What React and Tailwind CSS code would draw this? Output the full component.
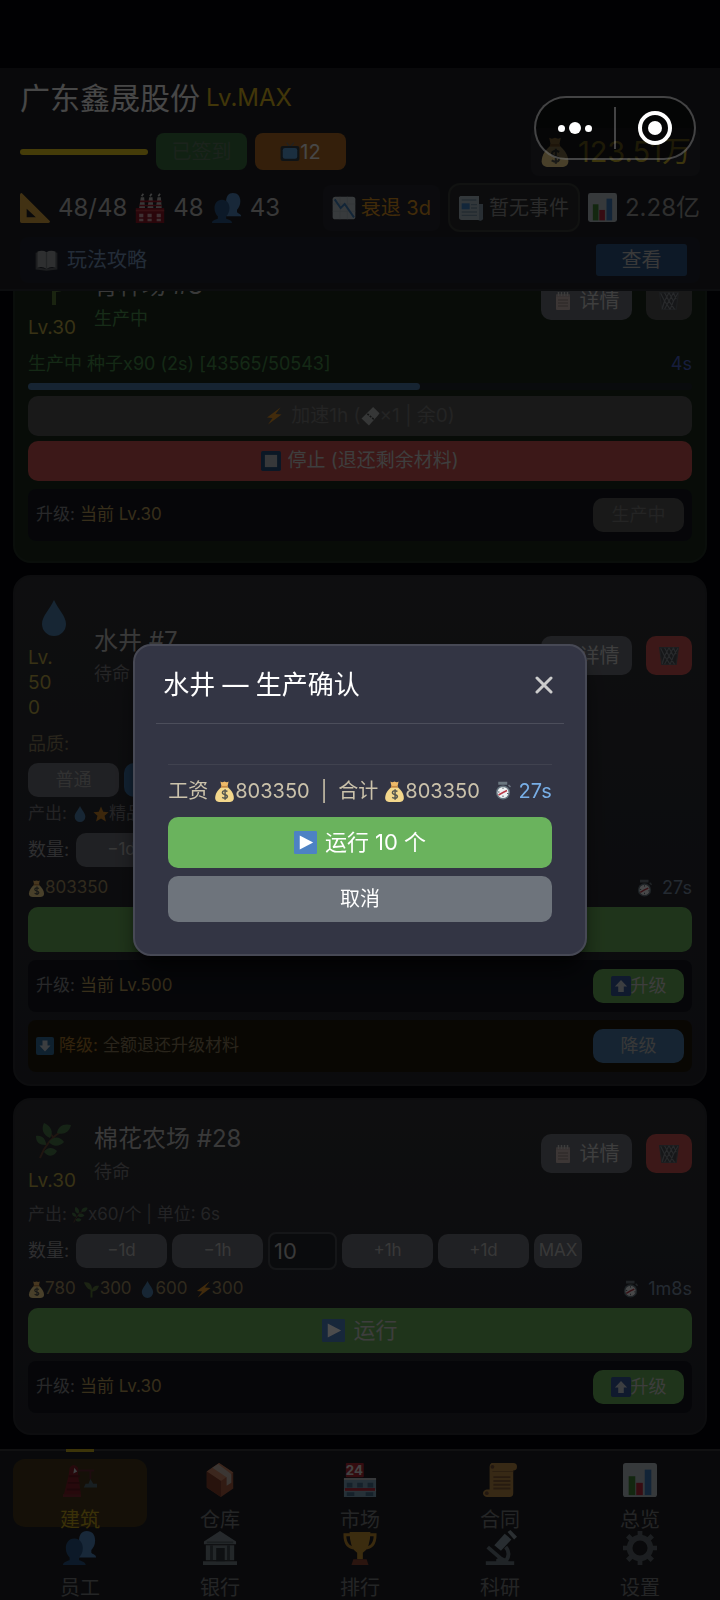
import React, { useState } from "react";
import clsx from "clsx";

// Emoji style icons, all on a 36x36 grid
const shapes = {
  tv: (
    <>
      <path d="M12 1l6 8 7-8" fill="none" stroke="#6b7075" strokeWidth="2" />
      <rect x="1" y="7" width="34" height="27" rx="4" fill="#33414c" />
      <rect x="5" y="11" width="26" height="19" rx="4" fill="#5d9fd8" />
    </>
  ),
  ruler: <path d="M2 0L36 34Q36 36 34 36H2Q0 36 0 34V2Q0 0 2 0ZM8 19V29H19Z" fill="#d9a441" fillRule="evenodd" />,
  factory: (
    <>
      <path d="M5 18L7 5h4l1 13ZM15 18l2-13h4l1 13ZM25 18l2-13h4l1 13Z" fill="#b9b9b9" />
      <path d="M5 15h27M6 10h26" stroke="#a51a2b" strokeWidth="2" />
      <path d="M8 4l2-3M18 4l2-3M28 4l2-3" stroke="#c8c8c8" strokeWidth="2" />
      <rect x="1" y="18" width="34" height="18" fill="#8c1525" />
      <path d="M1 21h34" stroke="#b43642" strokeWidth="2" />
      <path d="M5 25h5v4H5zM15 25h5v4h-5zM26 25h5v4h-5zM5 31h5v3H5zM15 31h5v3h-5zM26 31h5v3h-5z" fill="#d3a5aa" />
    </>
  ),
  people: (
    <>
      <path d="M25 0c6 0 9 4 9 10 0 5-2 8-4 10v3c2 2 5 2 5 5H17V10C17 4 20 0 25 0Z" fill="#5085be" />
      <path d="M12 8c6 0 9 5 9 10s-2 8-4 10v3c3 1 7 2 7 5H0c0-3 4-4 7-5v-3c-2-2-4-5-4-10S6 8 12 8Z" fill="#2a5685" />
    </>
  ),
  chartDown: (
    <>
      <rect x="1" y="1" width="34" height="34" rx="4" fill="#bcc6cd" />
      <path d="M1 12h34M1 23h34M12 1v34M23 1v34" stroke="#a6b3bd" />
      <path d="M4 5l9 13 6-6 14 20" fill="none" stroke="#3f7cb8" strokeWidth="3" />
    </>
  ),
  news: (
    <>
      <path d="M26 12h10v20a4 4 0 0 1-8 2Z" fill="#889cac" />
      <path d="M2 0h28v36H4a4 4 0 0 1-4-4V2Z" fill="#a9b8c3" />
      <path d="M4 6h22M18 13h9M18 18h9M4 24h23M4 29h23" stroke="#7690a3" strokeWidth="2" />
      <rect x="4" y="11" width="12" height="9" fill="#3c7fc4" />
    </>
  ),
  bars: (
    <>
      <rect width="36" height="36" rx="3" fill="#b6c0c7" />
      <rect x="6" y="14" width="7" height="20" fill="#418438" />
      <rect x="14" y="21" width="7" height="13" fill="#b92b3e" />
      <rect x="23" y="7" width="7" height="27" fill="#3c78b8" />
    </>
  ),
  book: (
    <>
      <path d="M1 6l4-1v24l12 2 14-2V5l4 1v26l-17 2L1 32Z" fill="#5e6368" />
      <path d="M4 4q8-3 14 1v26q-6-4-14-2ZM32 4q-8-3-14 1v26q6-4 14-2Z" fill="#9a9ea1" />
      <path d="M18 5v26" stroke="#73787c" strokeWidth="2" />
    </>
  ),
  bag: (
    <>
      <path d="M11 1q3 2 7 0 4 2 7 0l-2 9H13Z" fill="#eeb968" />
      <path d="M13 10h10c6 5 11 12 11 19 0 5-4 7-8 7H10c-4 0-8-2-8-7 0-7 5-14 11-19Z" fill="#f3d78c" />
      <path d="M12 10h12" stroke="#c68b43" strokeWidth="3" />
      <path d="M23 18q-5-3-8 0-2 4 3 5t5 4q-2 5-9 1M19 14v18" fill="none" stroke="#54564f" strokeWidth="2.5" />
    </>
  ),
  bolt: <path d="M31 1L4 21l11 1L6 35 33 15l-12-1Z" fill="#dd9229" />,
  ticket: (
    <>
      <path d="M23 0l12 12-3 4L15 35 1 22Z" fill="#b5b8b8" />
      <path d="M12 13l13 11" stroke="#474a4a" strokeWidth="3" strokeDasharray="4 2" />
    </>
  ),
  stop: (
    <>
      <rect width="36" height="36" rx="3" fill="#264f7d" />
      <rect x="7" y="7" width="22" height="22" fill="#b9bdc1" />
    </>
  ),
  play: (
    <>
      <rect width="36" height="36" rx="2" fill="#4d82c4" />
      <path d="M9 7l21 11L9 29Z" fill="#fff" />
    </>
  ),
  up: (
    <>
      <rect width="36" height="36" rx="3" fill="#36579a" />
      <path d="M18 7L7 19h6v10h10V19h6Z" fill="#c9cfd8" />
    </>
  ),
  down: (
    <>
      <rect width="36" height="36" rx="4" fill="#356f9f" />
      <path d="M18 29L7 17h6V7h10v10h6Z" fill="#c9cfd8" />
    </>
  ),
  note: (
    <>
      <rect x="4" y="5" width="28" height="31" rx="2" fill="#c9b6b2" />
      <path d="M4 5h28v5H4Z" fill="#b7a7a7" />
      <path d="M9 0v8M15 0v8M21 0v8M27 0v8" stroke="#c9c9c9" strokeWidth="3" />
      <path d="M8 16h20M8 22h20M8 28h20" stroke="#8d7d7b" strokeWidth="2" />
    </>
  ),
  trash: (
    <g fill="none" stroke="#858b91" strokeWidth="2">
      <path d="M1 3h34l-4 30H5Z" fill="#4c4f54" stroke="#5f656b" />
      <path d="M3 4l7 14-4 14M10 3l8 15-8 15M18 3l8 15-6 15M26 3l5 12M10 18L18 3M18 18l8-15M26 18l8-14M6 30l4-12M10 18l10 15M18 18L10 33M18 18l10 15M26 18L20 33" />
    </g>
  ),
  drop: <path d="M18 0c4 9 12 16 12 24a12 12 0 0 1-24 0C6 16 14 9 18 0Z" fill="#4d80ad" />,
  star: <path d="M18 1l5 12 12 1-9 8 3 13-11-7-11 7 3-13-9-8 12-1Z" fill="#c9832a" />,
  herb: (
    <>
      <path d="M4 35C9 22 17 13 26 8M10 21l-4-3M17 14l-4-5M15 20l10-1M9 28l10 1" fill="none" stroke="#6d4a38" strokeWidth="2" />
      <path d="M8 0c7 3 10 9 6 15C7 12 5 6 8 0ZM35 2c-2 8-8 10-14 8 1-7 7-10 14-8ZM0 13c6-1 10 3 10 9-7 0-10-3-10-9ZM13 19c4-6 11-6 15 0-5 5-11 5-15 0ZM8 29c3-5 9-5 13-1-3 6-9 6-13 1Z" fill="#4c7a4c" />
    </>
  ),
  sprout: (
    <>
      <path d="M18 35V17" stroke="#587936" strokeWidth="4" />
      <path d="M2 3c12-2 17 5 17 16C10 18 7 13 2 3ZM34 10c-9-1-15 3-15 12 9 0 12-4 15-12Z" fill="#5e7a42" />
    </>
  ),
  watch: (
    <>
      <path d="M10 1h15v3H10zM29 6l4 4" stroke="#6b7780" strokeWidth="3" fill="#6b7780" />
      <circle cx="18" cy="21" r="14" fill="#66757f" />
      <circle cx="18" cy="21" r="11" fill="#eef1f3" />
      <path d="M9 26l9-5 8-4" fill="none" stroke="#b83a48" strokeWidth="3" />
      <path d="M18 11v3M8 20h3M18 30v-3M26 23h3" stroke="#55606a" strokeWidth="2" />
    </>
  ),
  crane: (
    <>
      <path d="M7 5q4-6 9 0v8l3 20H1L6 13Z" fill="#82212a" />
      <path d="M6 14h12M5 21h13M4 28h14" stroke="#641820" strokeWidth="2" />
      <path d="M16 8h17M29 8v9" stroke="#652b33" strokeWidth="2" />
      <path d="M12 5l3 4-4 2Z" fill="#cfd6db" />
      <path d="M24 22h12v4H22ZM29 17l3 5h-5Z" fill="#516873" />
      <rect y="33" width="19" height="3" fill="#842a32" />
    </>
  ),
  box: (
    <>
      <path d="M17 0l15 10v17L19 36 4 26V9Z" fill="#a95b42" />
      <path d="M17 0l15 10-13 9L4 9Z" fill="#c98465" />
      <path d="M4 9l15 10v17L4 26Z" fill="#86402e" />
      <path d="M10 5l15 10v9l5-3v-9L16 1Z" fill="#c5b6ac" />
    </>
  ),
  store: (
    <>
      <rect x="1" y="17" width="34" height="19" fill="#7fa5bd" />
      <path d="M4 21h6v5H4zM15 21h6v5h-6zM26 21h6v5h-6zM4 31h8v4H4zM24 31h8v4h-8z" fill="#486e8e" />
      <path d="M1 17h34M1 29h34" stroke="#b9c0c5" strokeWidth="2" />
      <path d="M2 28h32" stroke="#b72d3f" strokeWidth="3" />
      <rect x="3" width="19" height="15" rx="1" fill="#ae2836" />
      <text x="12" y="13" fontSize="14" fontWeight="700" textAnchor="middle" fill="#e0e0e0">24</text>
    </>
  ),
  scroll: (
    <>
      <path d="M9 0h23q4 0 4 4t-4 4v24q0 4-4 4H4q-4-1-4-4t4-4h3V4q0-3 2-4Z" fill="#b88a46" />
      <path d="M10 9h22" stroke="#8d6638" />
      <circle cx="10" cy="4" r="2" fill="#765039" />
      <circle cx="4" cy="32" r="2" fill="#765039" />
      <path d="M11 15h18M11 19h18M11 23h18M11 27h18" stroke="#825a37" strokeWidth="2" />
    </>
  ),
  bank: (
    <>
      <path d="M18 0l17 11v3H1v-3Z" fill="#7f8b93" />
      <path d="M3 15h30v16H3zM0 32h36v4H0z" fill="#77838b" />
      <path d="M9 15v16M27 15v16" stroke="#414a51" strokeWidth="3" />
      <rect x="14" y="18" width="9" height="14" fill="#30373c" />
      <path d="M4 12h28" stroke="#59646c" strokeWidth="2" />
    </>
  ),
  trophy: (
    <>
      <path d="M8 4H2q0 14 11 14M28 4h6q0 14-11 14" fill="none" stroke="#c18d30" strokeWidth="3" />
      <path d="M7 1h22q0 17-8 22v7h-6v-7Q7 18 7 1Z" fill="#c79433" />
      <path d="M11 30h14l2 6H9Z" fill="#914633" />
    </>
  ),
  microscope: (
    <>
      <path d="M24 17q6 7 0 15" fill="none" stroke="#6c7a84" strokeWidth="4" />
      <path d="M5 17l15 13" stroke="#6c7a84" strokeWidth="4" />
      <path d="M12 15l11-12 7 6-11 12Z" fill="#8798a3" />
      <path d="M26 1l3-2 7 7-3 3Z" fill="#8f9ea8" />
      <path d="M3 32h30v4H3ZM14 30q6-5 13 2H14Z" fill="#6c7a84" />
    </>
  ),
  gear: (
    <>
      <circle cx="18" cy="18" r="11" fill="none" stroke="#5e676e" strokeWidth="6" />
      <path d="M18 0v6M18 30v6M0 18h6M30 18h6M5 5l5 5M26 26l5 5M31 5l-5 5M5 31l5-5" stroke="#5e676e" strokeWidth="5" />
    </>
  ),
};

const Icon = ({ name, className }) => (
  <svg viewBox="0 0 36 36" className={clsx("shrink-0 overflow-visible", className)} aria-hidden="true">
    {shapes[name]}
  </svg>
);

const navItems = [
  { icon: "crane", label: "建筑" },
  { icon: "box", label: "仓库" },
  { icon: "store", label: "市场" },
  { icon: "scroll", label: "合同" },
  { icon: "bars", label: "总览" },
  { icon: "people", label: "员工" },
  { icon: "bank", label: "银行" },
  { icon: "trophy", label: "排行" },
  { icon: "microscope", label: "科研" },
  { icon: "gear", label: "设置" },
];

const Header = () => (
  <header className="shrink-0 border-b-2 border-[#2b2d33] bg-[#202127] px-5 pt-2 pb-[6px]">
    <div className="flex h-11 items-center gap-[6px]">
      <h1 className="text-[30px] text-[#eeeeee]">广东鑫晟股份</h1>
      <span className="text-2xl text-[#d9b51f]">Lv.MAX</span>
    </div>

    <div className="mt-[5px] flex h-[53px] items-center">
      <div className="h-[6px] w-32 rounded-full bg-[#e6c81e]" />
      <button className="ml-2 h-[37px] w-[91px] rounded-lg bg-[#3a6e40] text-xl text-[#5c7660]" disabled>
        已签到
      </button>
      <button className="ml-2 flex h-[37px] w-[91px] items-center justify-center rounded-lg bg-[#ad6a26] text-xl text-[#eeeeee]">
        <Icon name="tv" className="size-5" />12
      </button>
      <div className="ml-auto flex h-12 items-center gap-2 rounded-lg bg-[#282931] px-[9px] text-[29px] text-[#c9b12e]">
        <Icon name="bag" className="size-[30px]" />123.51万
      </div>
    </div>

    <div className="mt-[5px] flex h-[49px] items-center text-2xl text-[#bbbbbb]">
      <Icon name="ruler" className="size-[30px]" />
      <span className="ml-2">48/48</span>
      <Icon name="factory" className="ml-2 size-[30px]" />
      <span className="ml-2">48</span>
      <Icon name="people" className="ml-2 size-[30px]" />
      <span className="ml-2">43</span>
      <div className="ml-auto flex h-[46px] items-center gap-[5px] rounded-lg bg-[#26272f] px-[9px] text-xl text-[#d98f1f]">
        <Icon name="chartDown" className="size-6" />衰退 3d
      </div>
      <div className="ml-2 flex h-[49px] items-center gap-[6px] rounded-xl border-2 border-[#3a3d39] bg-[#292b2d] px-[9px] text-xl text-[#8c8c8c]">
        <Icon name="news" className="size-6" />暂无事件
      </div>
      <Icon name="bars" className="ml-2 size-[29px]" />
      <span className="ml-2 text-[#999999]">2.28亿</span>
    </div>

    <div className="mt-[5px] flex h-[46px] items-center rounded-lg bg-[#20242f] pr-[13px] pl-[15px]">
      <Icon name="book" className="size-[23px]" />
      <span className="ml-[9px] text-xl text-[#7694bd]">玩法攻略</span>
      <button className="ml-auto h-8 w-[91px] rounded-[3px] bg-[#2e5684] text-xl text-[#bfbfbf]">查看</button>
    </div>
  </header>
);

const Card = ({ icon, level, name, status, running, className, children }) => (
  <section
    className={clsx(
      "rounded-[18px] border-2 px-[13px] pt-[14px]",
      running ? "border-[#233126] bg-[#1b2a1c]" : "border-[#2c2e33] bg-linear-to-b from-[#303136] to-[#25262e]",
      className
    )}
  >
    <div className="flex items-center">
      <div className="flex w-[52px] flex-col text-[19px] leading-[25px] text-[#bba846]">
        <span className="flex h-[54px] items-center justify-center">
          <Icon name={icon} className="size-9" />
        </span>
        {level.map((part) => (
          <span key={part}>{part}</span>
        ))}
      </div>
      <div className="ml-[14px] flex-1">
        <h2 className="text-2xl leading-9 text-[#bfbfbf]">{name}</h2>
        <p className={clsx("text-lg leading-[30px]", running ? "text-[#4d9450]" : "text-[#7c7c80]")}>{status}</p>
      </div>
      <button className="flex h-[39px] w-[91px] items-center justify-center gap-2 rounded-[10px] bg-[#6c6f78] text-xl text-[#cfcfcf]">
        <Icon name="note" className="size-[18px]" />详情
      </button>
      <button
        aria-label="拆除"
        className={clsx(
          "ml-[14px] flex h-[39px] w-[46px] items-center justify-center rounded-[10px]",
          running ? "bg-[#555555]" : "bg-[#c95350]"
        )}
      >
        <Icon name="trash" className="size-5" />
      </button>
    </div>
    <div className="mt-[10px] flex flex-col gap-[5px]">{children}</div>
  </section>
);

const Quantity = ({ id }) => {
  const [amount, setAmount] = useState("10");
  const step = "h-[34px] w-[91px] rounded-[10px] bg-[#6c6f78] text-[17px] text-[#bdbdbd]";

  return (
    <div className="flex h-[38px] items-center gap-[5px]">
      <label htmlFor={id} className="w-[43px] shrink-0 text-lg text-[#9c9ca0]">数量:</label>
      <button className={step}>−1d</button>
      <button className={step}>−1h</button>
      <input
        id={id}
        value={amount}
        onChange={(e) => setAmount(e.target.value)}
        className="h-[38px] w-[69px] rounded-lg border-2 border-[#484a50] bg-[#24262d] px-1 text-[22px] text-[#bfbfbf]"
      />
      <button className={step}>+1h</button>
      <button className={step}>+1d</button>
      <button className="h-[34px] w-12 rounded-[10px] bg-[#6c6f78] text-[17px] text-[#bdbdbd]">MAX</button>
    </div>
  );
};

const Costs = ({ items, time }) => (
  <div className="flex h-7 items-center gap-[7px] text-[17px] text-[#a08c62]">
    {items.map(([icon, value]) => (
      <span key={icon} className="flex items-center">
        <Icon name={icon} className="size-[17px]" />{value}
      </span>
    ))}
    <span className="ml-auto flex items-center gap-[9px] text-lg text-[#7a8ca5]">
      <Icon name="watch" className="size-[17px]" />{time}
    </span>
  </div>
);

const RunButton = () => (
  <button className="flex h-[45px] items-center justify-center gap-2 rounded-[10px] bg-[#6ab05a] text-[22px] text-[#cccccc]">
    <Icon name="play" className="size-[23px]" />运行
  </button>
);

const UpgradeRow = ({ level, children }) => (
  <div className="mt-[3px] flex h-[52px] items-center rounded-lg bg-[#141720] px-2 text-[17px]">
    <span className="text-[#85878c]">升级:</span>
    <span className="ml-[5px] text-[#b89b58]">当前 {level}</span>
    {children}
  </div>
);

const UpgradeButton = () => (
  <button className="ml-auto flex h-[34px] w-[91px] items-center justify-center rounded-[10px] bg-[#6ab05a] text-lg text-[#cccccc]">
    <Icon name="up" className="size-5" />升级
  </button>
);

const Nav = () => (
  <nav className="grid shrink-0 grid-cols-5 border-t-2 border-[#3a3b3e] bg-[#202126] px-[10px] pt-2 pb-[5px]">
    {navItems.map((item, index) => (
      <a
        key={item.label}
        href="#"
        className={clsx(
          "relative mx-[3px] flex h-[68px] flex-col items-center rounded-xl pt-1 text-xl",
          index === 0 ? "bg-[#46381d] text-[#c2a31d]" : "text-[#7a7c7f]"
        )}
      >
        {index === 0 && <span className="absolute -top-[10px] h-[3px] w-7 bg-[#c9ad1e]" />}
        <Icon name={item.icon} className="size-[34px]" />
        <span className="mt-[13px] leading-5">{item.label}</span>
      </a>
    ))}
  </nav>
);

const ConfirmDialog = () => (
  <div className="fixed inset-0 flex items-center justify-center bg-black/70">
    <div
      role="dialog"
      aria-labelledby="confirm-title"
      className="w-[63%] rounded-[18px] border-2 border-[#474955] bg-[#333544] px-[21px] pb-8 shadow-xl shadow-black/60"
    >
      <div className="flex h-[78px] items-center justify-between border-b border-[#4c4e5b] px-[7px]">
        <h2 id="confirm-title" className="text-[26px] text-white">水井 — 生产确认</h2>
        <button aria-label="关闭" className="p-1">
          <svg viewBox="0 0 18 18" className="size-[18px]" stroke="#cccccc" strokeWidth="3" strokeLinecap="round">
            <path d="M2 2l14 14M16 2L2 16" />
          </svg>
        </button>
      </div>
      <div className="px-3">
        <div className="h-[41px] border-b border-[#40424f]" />
        <div className="flex h-[52px] items-center text-xl whitespace-nowrap text-[#cbc2ab]">
          <span>工资</span>
          <Icon name="bag" className="ml-[6px] size-[21px]" />
          <span>803350</span>
          <span className="mx-[11px]">|</span>
          <span>合计</span>
          <Icon name="bag" className="ml-[6px] size-[21px]" />
          <span>803350</span>
          <span className="ml-auto flex items-center gap-[7px] text-[#78aee6]">
            <Icon name="watch" className="size-[18px]" />27s
          </span>
        </div>
        <button className="flex h-[51px] w-full items-center justify-center gap-2 rounded-[10px] bg-[#6ab35d] text-[22px] text-white">
          <Icon name="play" className="size-[23px]" />运行 10 个
        </button>
        <button className="mt-2 h-[46px] w-full rounded-[10px] bg-[#6e747c] text-xl text-white">取消</button>
      </div>
    </div>
  </div>
);

// Host app capsule, always above the page and its dialogs
const Capsule = () => (
  <div className="fixed top-24 right-6 flex h-16 w-[162px] items-center rounded-full border-2 border-white/25 bg-black/50">
    <button aria-label="更多" className="flex flex-1 items-center justify-center gap-1">
      <span className="size-[7px] rounded-full bg-white" />
      <span className="size-3 rounded-full bg-white" />
      <span className="size-[7px] rounded-full bg-white" />
    </button>
    <span className="h-[42px] w-[2px] bg-white/25" />
    <button aria-label="退出" className="flex flex-1 items-center justify-center">
      <span className="flex size-[34px] items-center justify-center rounded-full border-4 border-white">
        <span className="size-[14px] rounded-full bg-white" />
      </span>
    </button>
  </div>
);

const App = () => {
  return (
    <div className="flex h-screen flex-col overflow-hidden bg-[#04040a] pt-[68px] font-['Inter','Noto_Sans_CJK_SC',sans-serif]">
      <Header />

      <main className="min-h-0 flex-1 overflow-hidden px-[13px]">
        {/* list is scrolled down, so the first card starts under the header */}
        <div className="-mt-[46px] flex flex-col gap-3">
          <Card icon="sprout" level={["Lv.30"]} name="育种场 #8" status="生产中" running className="pb-5">
            <div className="flex h-7 items-center justify-between text-lg text-[#458a49]">
              <span>生产中 种子x90 (2s) [43565/50543]</span>
              <span className="text-[#4b62c8]">4s</span>
            </div>
            <div className="mb-[1px] h-[7px] rounded-full bg-[#20262d]">
              <div className="h-full rounded-full bg-[#4c7ba8]" style={{ width: "59%" }} />
            </div>
            <button className="flex h-10 items-center justify-center rounded-[10px] bg-[#555555] text-[19px] text-[#787878]" disabled>
              <Icon name="bolt" className="mr-2 size-[18px]" />加速1h (
              <Icon name="ticket" className="size-[19px]" />×1 | 余0)
            </button>
            <button className="flex h-10 items-center justify-center gap-[6px] rounded-[10px] bg-[#c95350] text-[19px] text-[#cfcfcf]">
              <Icon name="stop" className="size-5" />停止 (退还剩余材料)
            </button>
            <UpgradeRow level="Lv.30">
              <button className="ml-auto h-[34px] w-[91px] rounded-[10px] bg-[#555555] text-lg text-[#787878]" disabled>
                生产中
              </button>
            </UpgradeRow>
          </Card>

          <Card icon="drop" level={["Lv.", "50", "0"]} name="水井 #7" status="待命" className="pb-3">
            <div className="h-7 text-lg text-[#8a7c5c]">品质:</div>
            <div className="flex gap-[5px] text-lg text-[#a6a6a6]">
              <button className="h-[34px] w-[91px] rounded-[10px] bg-[#6c6f78]">普通</button>
              <button className="h-[34px] w-[91px] rounded-[10px] bg-[#3d73a8]">精品</button>
            </div>
            <div className="flex h-6 items-center text-[17px] text-[#77777c]">
              产出: <Icon name="drop" className="ml-[5px] size-4" />
              <Icon name="star" className="ml-[5px] size-4" />精品x60/个
            </div>
            <Quantity id="well-amount" />
            <Costs items={[["bag", "803350"]]} time="27s" />
            <RunButton />
            <UpgradeRow level="Lv.500">
              <UpgradeButton />
            </UpgradeRow>
            <div className="mt-[3px] flex h-[52px] items-center rounded-lg bg-[#201a0c] px-2 text-[17px]">
              <Icon name="down" className="size-[18px]" />
              <span className="ml-[5px] text-[#a8762a]">降级:</span>
              <span className="ml-[5px] text-[#8a7a5a]">全额退还升级材料</span>
              <button className="ml-auto h-[34px] w-[91px] rounded-[10px] bg-[#4c7ba8] text-lg text-[#bbbbbb]">降级</button>
            </div>
          </Card>

          <Card icon="herb" level={["Lv.30"]} name="棉花农场 #28" status="待命" className="pb-5">
            <div className="flex h-6 items-center text-[17px] text-[#77777c]">
              产出: <Icon name="herb" className="ml-[5px] size-4" />x60/个 | 单位: 6s
            </div>
            <Quantity id="cotton-amount" />
            <Costs
              items={[["bag", "780"], ["sprout", "300"], ["drop", "600"], ["bolt", "300"]]}
              time="1m8s"
            />
            <RunButton />
            <UpgradeRow level="Lv.30">
              <UpgradeButton />
            </UpgradeRow>
          </Card>
        </div>
      </main>

      <Nav />
      <ConfirmDialog />
      <Capsule />
    </div>
  );
};

export default App;
